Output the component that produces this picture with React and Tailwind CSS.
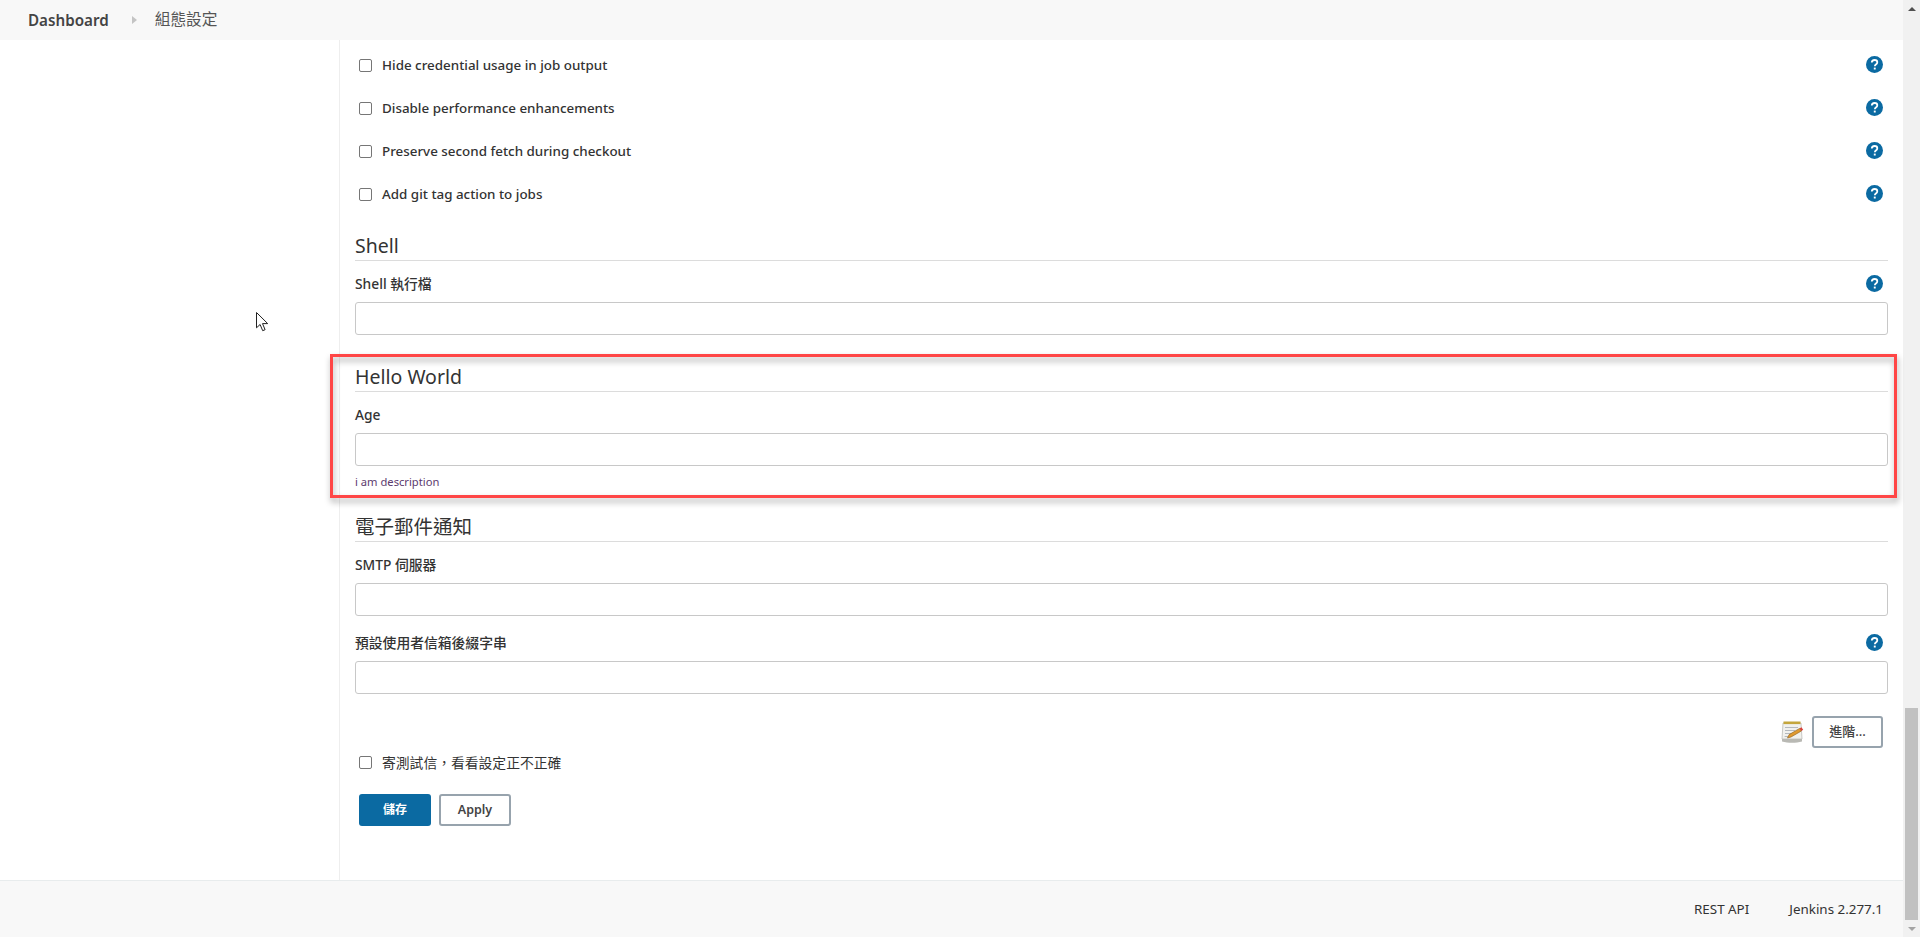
import React from 'react';

const FONT = "font-['Noto_Sans','Noto_Sans_CJK_TC',sans-serif]";

function HelpIcon() {
  return (
    <svg width="17" height="17" viewBox="0 0 17 17" className="shrink-0">
      <circle cx="8.5" cy="8.5" r="8.5" fill="#0b6aa2" />
      <path d="M5.8 6.6c0-1.6 1.2-2.6 2.8-2.6s2.7.9 2.7 2.3c0 1.1-.6 1.7-1.4 2.2-.7.5-1 .8-1 1.5v.3" fill="none" stroke="#fff" strokeWidth="1.8" />
      <rect x="7.8" y="11.6" width="1.9" height="1.9" fill="#fff" />
    </svg>
  );
}

function Checkbox() {
  return <span className="block w-[13px] h-[13px] rounded-[2px] border border-[#767676] bg-white shrink-0" />;
}

function CheckRow({ label, className }) {
  return (
    <div className={`flex items-center pr-[5px] ${className || 'h-[43px]'}`}>
      <div className="ml-[4px]"><Checkbox /></div>
      <span className="ml-[10px] text-[13.4px] font-medium text-[#333]">{label}</span>
      <div className="ml-auto mb-[2px] flex"><HelpIcon /></div>
    </div>
  );
}

function SectionHeader({ title, className }) {
  return (
    <div className={`h-[32px] border-b border-[#dcdcdc] text-[19.5px] leading-[34px] text-[#333] ${className || ''}`}>
      {title}
    </div>
  );
}

function TextField({ label, help, className }) {
  return (
    <div className={className}>
      <div className="flex items-center justify-between h-[19px] pr-[5px] text-[13.8px] font-medium text-[#333]">
        <span className="mt-[2px]">{label}</span>
        {help && <HelpIcon />}
      </div>
      <div className="mt-[9px] h-[33px] rounded-[3px] border border-[#c8c8c8] bg-white" />
    </div>
  );
}

function NotepadIcon() {
  return (
    <svg width="23" height="23" viewBox="0 0 23 23" className="shrink-0">
      <path d="M2 2h18l1 16H1z" fill="#f1f1ee" stroke="#bdbdb8" strokeWidth="0.8" />
      <path d="M1 18h20v2.4c-6 1.8-14 1.8-20 0z" fill="#b9b9b4" />
      <rect x="2.5" y="0.5" width="17" height="2.6" fill="#c4a63c" />
      <path d="M4 6.5h13M4 9.5h10M4 12.5h7M3.6 15.5h4" stroke="#b4b9be" strokeWidth="1" />
      <path d="M6.5 17l1.6-3.4L18.6 7.4l1.8 2.6L10 16z" fill="#e09a30" stroke="#8a5a16" strokeWidth="0.6" />
      <path d="M18.6 7.4l1.8 2.6 1.8-1.2-1.8-2.6z" fill="#d9403a" />
    </svg>
  );
}

function Cursor() {
  return (
    <svg width="13" height="20" viewBox="0 0 13 20" className="absolute left-[256px] top-[272px]">
      <path d="M.5.5v15.3l3.6-3.3 2.6 6.2 2.4-1-2.6-6.1h5.2z" fill="#fff" stroke="#222" strokeWidth="1" />
    </svg>
  );
}

export default function App() {
  return (
    <div className={`flex h-screen overflow-hidden bg-white ${FONT}`}>
      <div className="flex flex-col flex-1 min-w-0">
        {/* Breadcrumb bar */}
        <header className="flex items-center h-[40px] shrink-0 bg-[#f8f8f8] pl-[28px]">
          <span className="text-[15.2px] font-semibold text-[#444]">Dashboard</span>
          <svg width="5" height="8" viewBox="0 0 5 8" className="ml-[23px]"><path d="M0 0l5 4-5 4z" fill="#c4c4c4" /></svg>
          <span className="ml-[18px] text-[15.7px] text-[#555]">組態設定</span>
        </header>

        <div className="relative flex flex-1 min-h-0">
          <Cursor />
          <aside className="w-[340px] shrink-0 border-r border-[#eeeeee]" />

          <main className="flex-1 min-w-0 px-[15px] pt-[4px]">
            <CheckRow label="Hide credential usage in job output" />
            <CheckRow label="Disable performance enhancements" />
            <CheckRow label="Preserve second fetch during checkout" />
            <CheckRow label="Add git tag action to jobs" className="h-[42px]" />

            <SectionHeader title="Shell" className="mt-[14px]" />
            <TextField label="Shell 執行檔" help className="mt-[13px]" />

            <div className="relative mt-[25px]">
              {/* Red annotation frame */}
              <div className="absolute -left-[25px] -right-[9px] -top-[6px] h-[144px] border-[3px] border-[#ff4646] drop-shadow-[1px_4px_3px_rgba(0,0,0,0.35)]" />
              <SectionHeader title="Hello World" />
              <TextField label="Age" className="mt-[13px]" />
              <div className="mt-[6px] h-[20px] text-[11.2px] leading-[20px] text-[#5c3a6e]">i am description</div>
            </div>

            <SectionHeader title="電子郵件通知" className="mt-[18px]" />
            <TextField label="SMTP 伺服器" className="mt-[13px]" />
            <TextField label="預設使用者信箱後綴字串" help className="mt-[17px]" />

            <div className="flex items-center justify-end gap-[8px] mt-[22px] pr-[5px]">
              <NotepadIcon />
              <button className="w-[71px] h-[32px] rounded-[3px] border-2 border-[#97a3ad] bg-white text-[13px] font-medium text-[#444]">進階...</button>
            </div>

            <div className="flex items-center h-[20px] mt-[4px]">
              <div className="ml-[4px]"><Checkbox /></div>
              <span className="ml-[10px] mt-[2px] text-[13.8px] text-[#333]">寄測試信，看看設定正不正確</span>
            </div>

            <div className="flex gap-[8px] mt-[22px] ml-[4px]">
              <button className="w-[72px] h-[32px] rounded-[3px] bg-[#0b6aa2] text-[12px] font-semibold text-white">儲存</button>
              <button className="w-[72px] h-[32px] rounded-[3px] border-2 border-[#97a3ad] bg-white text-[12.5px] font-semibold text-[#444]">Apply</button>
            </div>
          </main>
        </div>

        <footer className="flex items-center justify-end gap-[40px] h-[57px] shrink-0 border-t border-[#e8eced] bg-[#f8f8f8] pr-[20px] text-[13.4px] text-[#333]">
          <span>REST API</span>
          <span>Jenkins 2.277.1</span>
        </footer>
      </div>

      {/* Scrollbar */}
      <div className="flex flex-col w-[17px] shrink-0 bg-[#f1f1f1]">
        <div className="flex justify-center h-[708px] shrink-0 pt-[7px]">
          <svg width="8" height="4" viewBox="0 0 8 4"><path d="M4 0l4 4H0z" fill="#505050" /></svg>
        </div>
        <div className="h-[212px] shrink-0 mx-[2px] bg-[#c1c1c1]" />
        <div className="flex flex-1 items-center justify-center">
          <svg width="8" height="4" viewBox="0 0 8 4"><path d="M0 0h8L4 4z" fill="#a3a3a3" /></svg>
        </div>
      </div>
    </div>
  );
}
